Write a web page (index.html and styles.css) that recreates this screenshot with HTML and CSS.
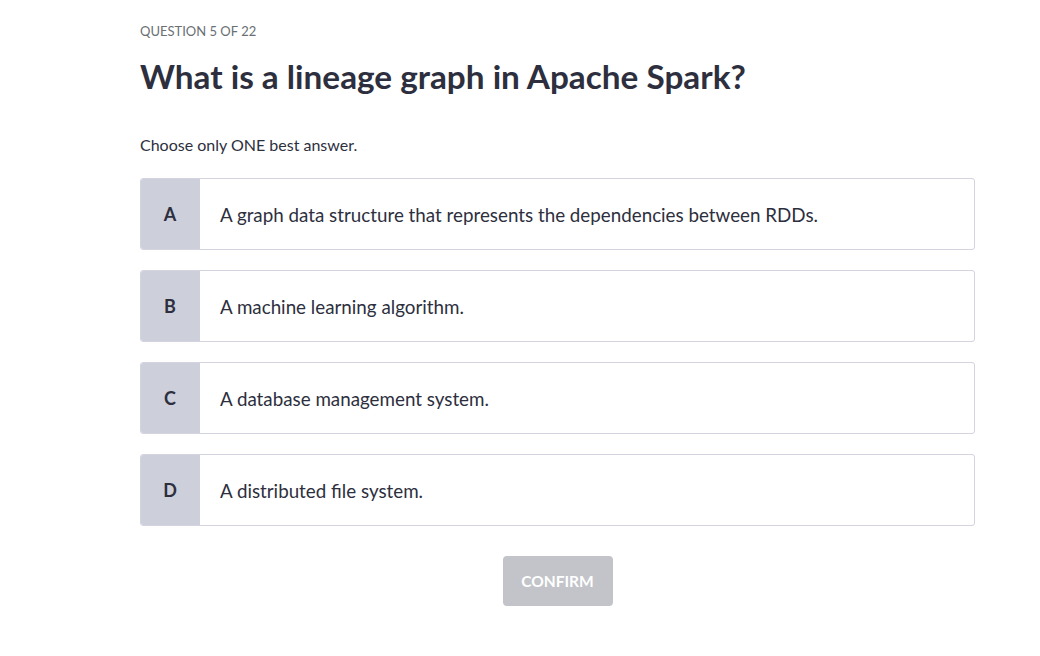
FILE: index.html
```html
<!DOCTYPE html>
<html lang="en">
<head>
<meta charset="utf-8">
<title>Question 5 of 22</title>
<link rel="stylesheet" href="styles.css">
</head>
<body>
<main class="quiz">
  <div class="counter">QUESTION 5 OF 22</div>
  <h1 class="question">What is a lineage graph in Apache Spark?</h1>
  <p class="hint">Choose only ONE best answer.</p>
  <ul class="options">
    <li class="option"><span class="letter">A</span><span class="text">A graph data structure that represents the dependencies between RDDs.</span></li>
    <li class="option"><span class="letter">B</span><span class="text">A machine learning algorithm.</span></li>
    <li class="option"><span class="letter">C</span><span class="text">A database management system.</span></li>
    <li class="option"><span class="letter">D</span><span class="text">A distributed file system.</span></li>
  </ul>
  <div class="actions">
    <button class="confirm" disabled>CONFIRM</button>
  </div>
</main>
</body>
</html>
```

FILE: styles.css
```css
* { box-sizing: border-box; }
html, body { margin: 0; padding: 0; background: #fff; }
body { font-family: "Lato", "Liberation Sans", sans-serif; color: #2d2f3e; }
.quiz { width: 835px; margin-left: 140px; padding-top: 22px; }
.counter { font-size: 13px; line-height: 18px; color: #6a6f73; }
.question { margin: 16px 0 0; font-size: 33.3px; line-height: 40px; font-weight: 700; color: #2d2f3e; }
.hint { margin: 39px 0 0; font-size: 16px; line-height: 20px; color: #2d2f3e; }
.options { list-style: none; margin: 23px 0 0; padding: 0; display: flex; flex-direction: column; gap: 20px; }
.option { display: flex; height: 72px; border: 1px solid #d3d4e0; border-radius: 3px; overflow: hidden; }
.letter { width: 60px; flex: none; background: #cdd0da; display: flex; align-items: center; justify-content: center; font-size: 18px; font-weight: 700; color: #2d2f3e; margin: -1px 0 -1px -1px; }
.text { display: flex; align-items: center; padding-left: 20px; font-size: 18.8px; color: #2d2f3e; }
.actions { display: flex; justify-content: center; margin-top: 30px; }
.confirm { width: 110px; height: 50px; border: 0; border-radius: 4px; background: #c2c4c9; color: #fff; font-family: inherit; font-size: 15.5px; font-weight: 700; }
```
